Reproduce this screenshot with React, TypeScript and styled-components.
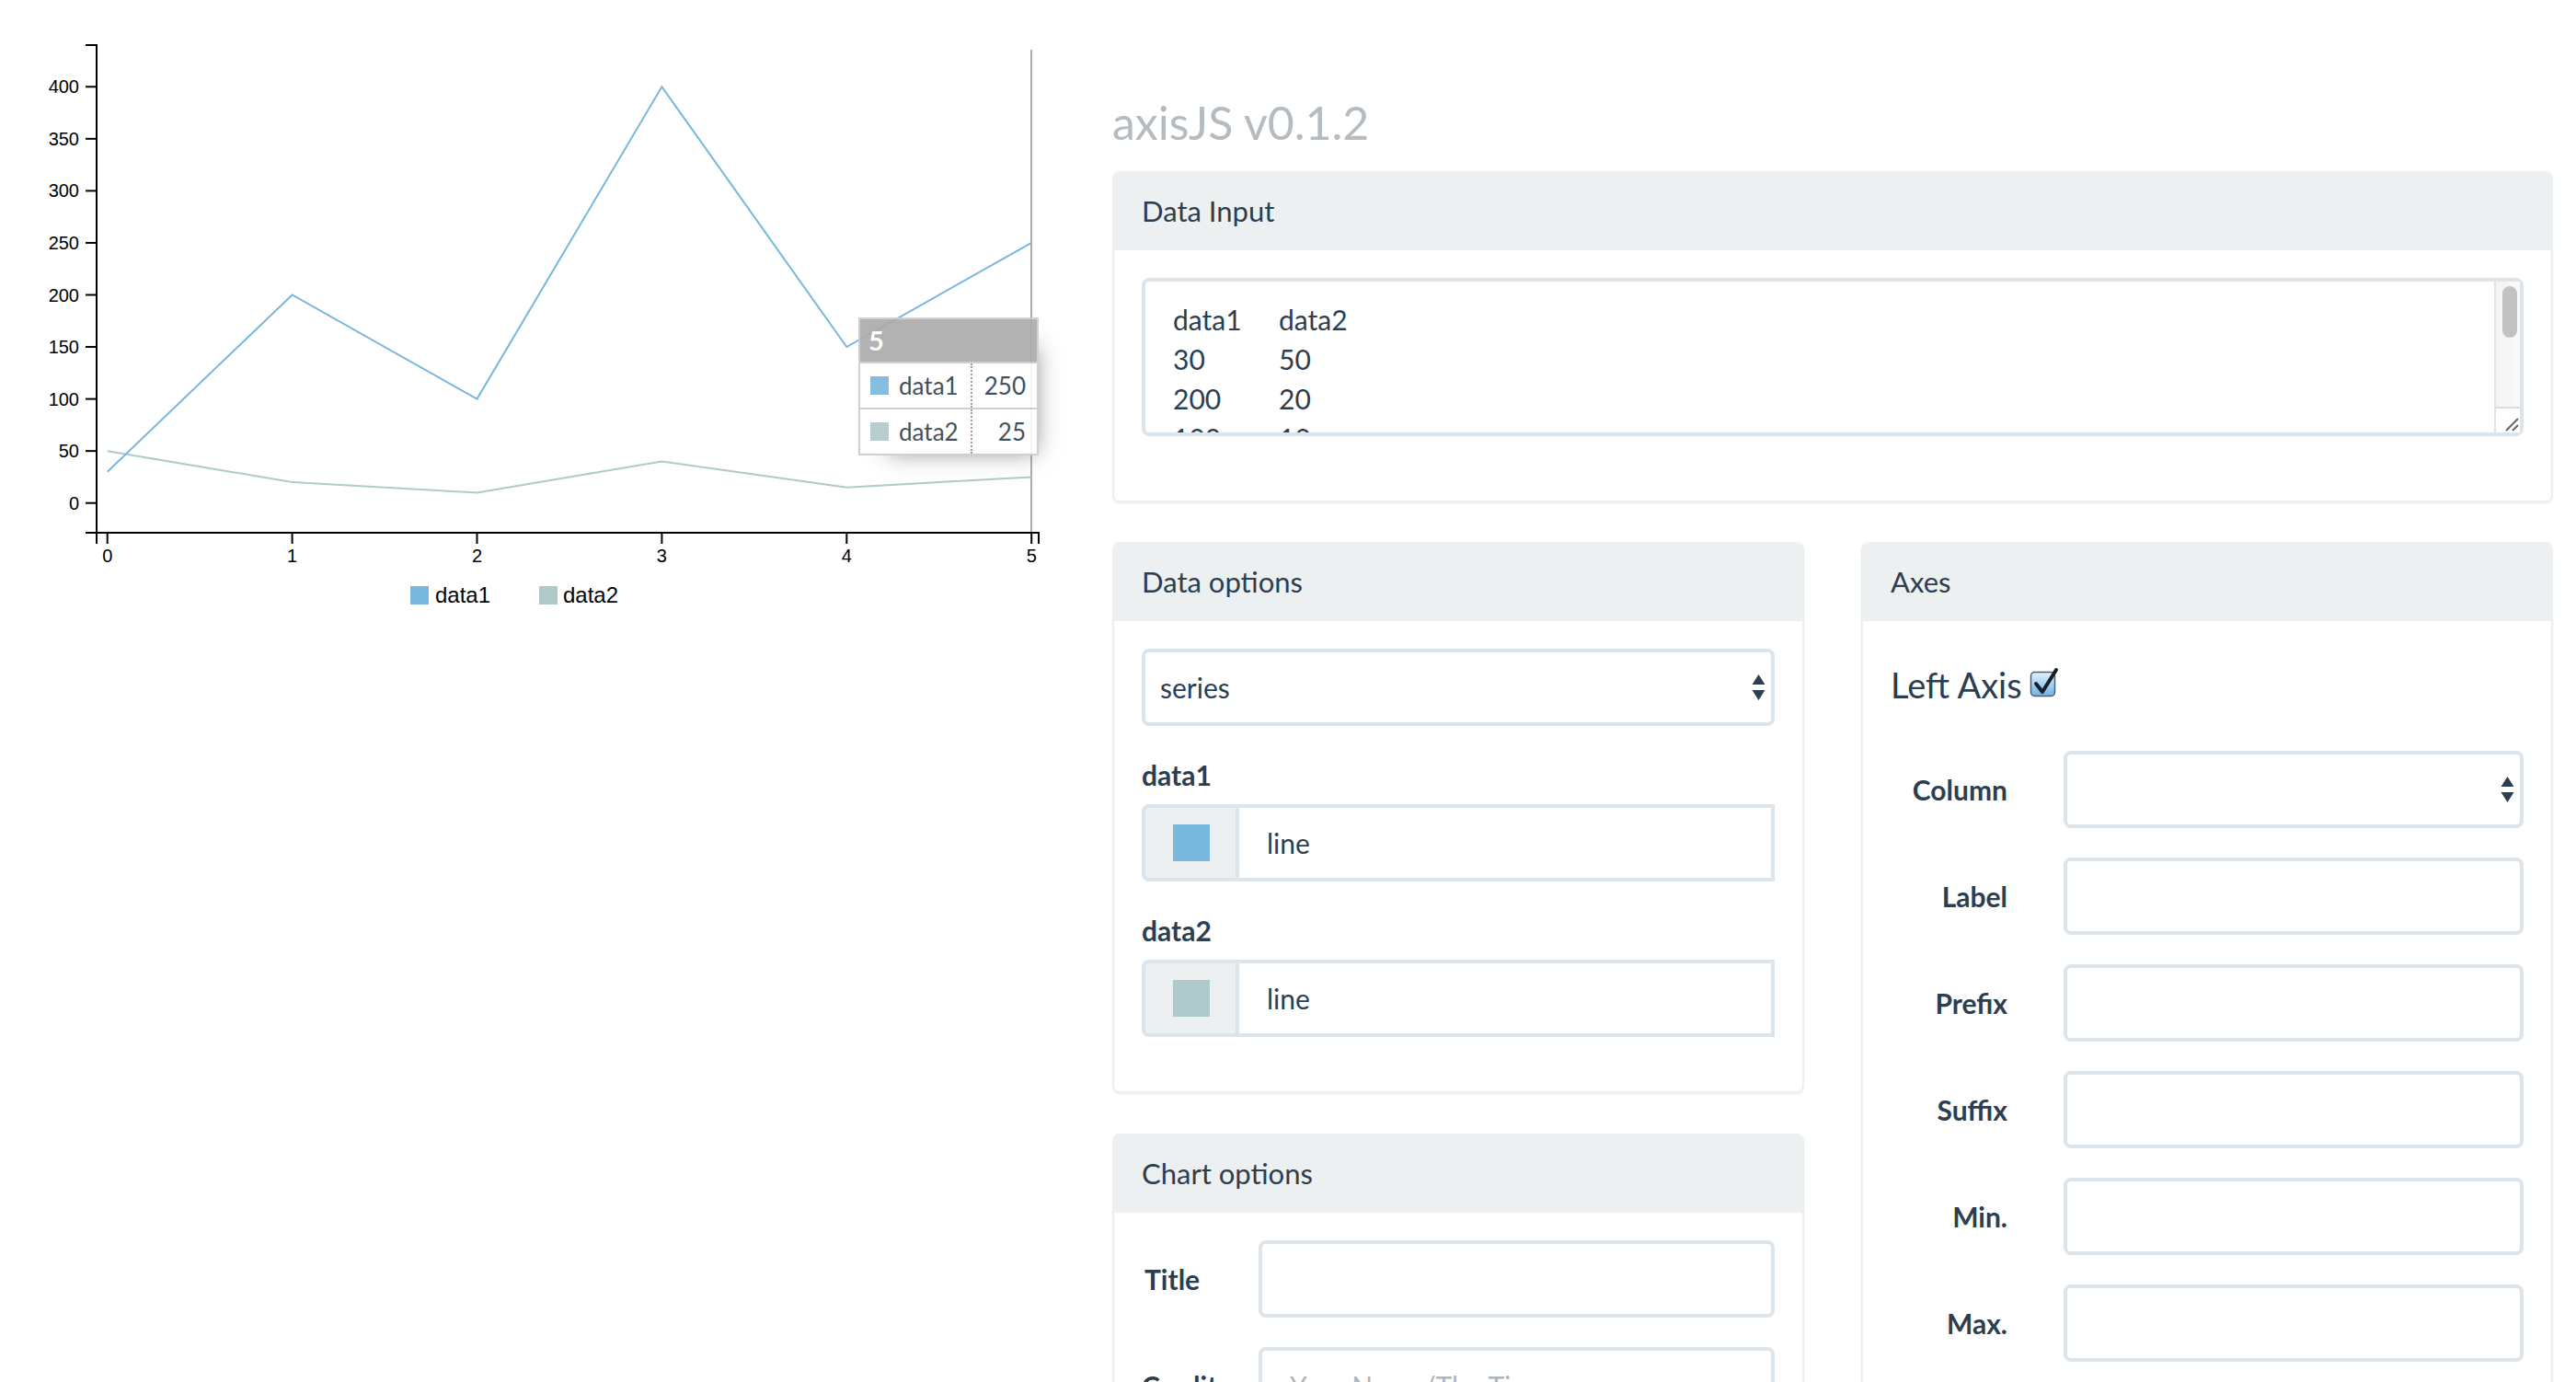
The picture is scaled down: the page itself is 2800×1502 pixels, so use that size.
import React from "react";
import styled, { createGlobalStyle } from "styled-components";

const GlobalStyle = createGlobalStyle`
  html, body { margin: 0; padding: 0; background: #ffffff; }
  body {
    font-family: Lato, "Open Sans", "Liberation Sans", sans-serif;
    color: #2c3e50;
    overflow: hidden;
  }
  *, *::before, *::after { box-sizing: border-box; }
`;

const BLUE = "#78b7de";
const TEAL = "#b0c9cb";

const data1 = [30, 200, 100, 400, 150, 250];
const data2 = [50, 20, 10, 40, 15, 25];

const yOf = (v: number) => 546.7 - 1.131 * v;
const xOf = (i: number) => 116.7 + 200.9 * i;

const Page = styled.div`
  display: flex;
  align-items: flex-start;
  width: 2800px;
  height: 1502px;
  overflow: hidden;
`;

const ChartColumn = styled.div`
  position: relative;
  flex: 0 0 1209px;
  height: 700px;
`;

const ChartSvg = styled.svg`
  display: block;
  font-family: "Liberation Sans", Arial, sans-serif;
`;

const Tooltip = styled.div`
  position: absolute;
  left: 933px;
  top: 345px;
  width: 196px;
  border: 2px solid #cccccc;
  background: #ffffff;
  opacity: 0.9;
  box-shadow: 14px 14px 24px -18px rgb(119, 119, 119);
  font-family: Lato, "Open Sans", sans-serif;
`;

const TooltipHead = styled.div`
  height: 48px;
  padding-left: 9px;
  background: #aaaaaa;
  border-bottom: 2px solid #cccccc;
  color: #ffffff;
  font-weight: 700;
  font-size: 29px;
  line-height: 46px;
`;

const TooltipRow = styled.div<{ $last?: boolean }>`
  display: grid;
  grid-template-columns: 122px 1fr;
  height: ${(p) => (p.$last ? 48 : 50)}px;
  border-bottom: ${(p) => (p.$last ? "none" : "2px solid #cccccc")};
  font-size: 26px;
  color: #2c3e50;
`;

const TooltipName = styled.div`
  display: flex;
  align-items: center;
  gap: 11px;
  padding-left: 11px;
  border-right: 2px dotted #999999;
`;

const TooltipValue = styled.div`
  display: flex;
  align-items: center;
  justify-content: flex-end;
  padding-right: 12px;
`;

const Swatch = styled.span<{ $color: string; $size: number }>`
  display: inline-block;
  flex: 0 0 auto;
  width: ${(p) => p.$size}px;
  height: ${(p) => p.$size}px;
  background: ${(p) => p.$color};
`;

const Controls = styled.div`
  flex: 0 0 1566px;
  display: flex;
  flex-direction: column;
`;

const AppTitle = styled.h3`
  margin: 105px 0 25px;
  font-size: 50px;
  line-height: 56px;
  font-weight: 400;
  color: #b4bcc2;
`;

const Panel = styled.section<{ $mb?: number }>`
  border: 2px solid #ecf0f1;
  border-radius: 8px;
  background: #ffffff;
  box-shadow: 0 2px 2px rgba(0, 0, 0, 0.05);
  margin-bottom: ${(p) => p.$mb ?? 44}px;
`;

const PanelHeading = styled.div`
  background: #ecf0f1;
  border-radius: 6px 6px 0 0;
  padding: 19px 30px 21px;
  font-size: 31px;
  line-height: 44px;
  color: #2c3e50;
`;

const PanelBody = styled.div`
  padding: 30px;
`;

const AreaWrap = styled.div`
  position: relative;
  margin-bottom: 40px;
`;

const DataArea = styled.textarea`
  display: block;
  width: 100%;
  height: 172px;
  margin: 0;
  padding: 20px 60px 20px 30px;
  border: 4px solid #dce4ec;
  border-radius: 8px;
  font-family: Lato, "Open Sans", sans-serif;
  font-size: 30px;
  line-height: 42.86px;
  color: #2c3e50;
  tab-size: 115px;
  -moz-tab-size: 115px;
  white-space: pre;
  resize: none;
  outline: none;
  overflow: hidden;
`;

const ScrollTrack = styled.div`
  position: absolute;
  top: 4px;
  right: 4px;
  width: 28px;
  height: 136px;
  padding: 5px 5px 0 7px;
  background: linear-gradient(to right, #f3f3f3, #fafafa);
  border-left: 2px solid #e3e3e3;
`;

const ScrollThumb = styled.div`
  width: 16px;
  height: 56px;
  border-radius: 8px;
  background: #c2c2c2;
`;

const ResizeCorner = styled.div`
  position: absolute;
  right: 4px;
  bottom: 4px;
  width: 28px;
  height: 28px;
  display: flex;
  align-items: flex-end;
  justify-content: flex-end;
  background: #ffffff;
  border-left: 2px solid #e3e3e3;
  border-top: 2px solid #dcdcdc;
`;

const Columns = styled.div`
  display: grid;
  grid-template-columns: 752px 752px;
  column-gap: 62px;
  align-items: start;
`;

const Stack = styled.div`
  display: flex;
  flex-direction: column;
`;

const FormGroup = styled.div<{ $mb?: number }>`
  margin-bottom: ${(p) => p.$mb ?? 32}px;
`;

const FieldLabel = styled.label`
  display: block;
  margin-bottom: 10px;
  font-size: 30px;
  line-height: 43px;
  font-weight: 700;
  color: #2c3e50;
`;

const SelectWrap = styled.div`
  position: relative;
  width: 100%;
`;

const Select = styled.select`
  display: block;
  width: 100%;
  height: 84px;
  padding: 0 50px 0 16px;
  border: 4px solid #dce4ec;
  border-radius: 8px;
  background: #ffffff;
  font-family: Lato, "Open Sans", sans-serif;
  font-size: 30px;
  color: #2c3e50;
  appearance: none;
  -webkit-appearance: none;
  outline: none;
`;

const SelectArrows = styled.svg`
  position: absolute;
  right: 10px;
  top: 50%;
  transform: translateY(-50%);
  pointer-events: none;
`;

const InputGroup = styled.div`
  display: flex;
  height: 84px;
`;

const Addon = styled.div`
  flex: 0 0 102px;
  display: flex;
  align-items: center;
  justify-content: center;
  padding-left: 2px;
  background: #ecf0f1;
  border: 4px solid #dce4ec;
  border-right: none;
  border-radius: 8px 0 0 8px;
`;

const TextInput = styled.input<{ $square?: boolean }>`
  display: block;
  flex: 1 1 auto;
  width: 100%;
  min-width: 0;
  height: 84px;
  padding: 0 30px;
  border: 4px solid #dce4ec;
  border-radius: ${(p) => (p.$square ? "0" : "8px")};
  background: #ffffff;
  font-family: Lato, "Open Sans", sans-serif;
  font-size: 30px;
  color: #2c3e50;
  outline: none;

  &::placeholder {
    color: #acb6c0;
  }
`;

const HRow = styled.div<{ $label: number; $gap: number; $align: "left" | "right"; $mb?: number }>`
  display: grid;
  grid-template-columns: ${(p) => p.$label}px 1fr;
  column-gap: ${(p) => p.$gap}px;
  align-items: center;
  margin-bottom: ${(p) => p.$mb ?? 32}px;

  & > label {
    text-align: ${(p) => p.$align};
    white-space: nowrap;
    font-size: 30px;
    line-height: 43px;
    font-weight: 700;
    color: #2c3e50;
  }
`;

const AxisHeading = styled.h4`
  display: flex;
  align-items: center;
  margin: 18px 0 51px;
  font-size: 38px;
  line-height: 42px;
  font-weight: 400;
  color: #2c3e50;
`;

const CheckIcon = styled.svg`
  margin-left: 8px;
  margin-top: -4px;
`;

const Arrows = () => (
  <SelectArrows width="15" height="28" viewBox="0 0 15 28">
    <path d="M7.5 0 L14.5 11 H0.5 Z M0.5 17 H14.5 L7.5 28 Z" fill="#2c3e50" />
  </SelectArrows>
);

const Chart = () => {
  const yTicks = [0, 50, 100, 150, 200, 250, 300, 350, 400];
  const pts = (arr: number[]) => arr.map((v, i) => `${xOf(i)},${yOf(v)}`).join(" ");
  return (
    <ChartSvg width="1180" height="700" viewBox="0 0 1180 700">
      <line x1="1121" y1="54" x2="1121" y2="579" stroke="#ababab" strokeWidth="2" />
      <polyline points={pts(data2)} fill="none" stroke={TEAL} strokeWidth="2" />
      <polyline points={pts(data1)} fill="none" stroke={BLUE} strokeWidth="2" />
      <path d="M93,49 H105 V579 H93" fill="none" stroke="#000" strokeWidth="2" />
      {yTicks.map((v) => (
        <g key={v}>
          <line x1="93" y1={yOf(v)} x2="105" y2={yOf(v)} stroke="#000" strokeWidth="2" />
          <text x="86" y={yOf(v)} dy="0.35em" textAnchor="end" fontSize="20" fill="#000">
            {v}
          </text>
        </g>
      ))}
      <path d="M105,591 V579 H1129 V591" fill="none" stroke="#000" strokeWidth="2" />
      {[0, 1, 2, 3, 4, 5].map((i) => (
        <g key={i}>
          <line x1={xOf(i)} y1="579" x2={xOf(i)} y2="591" stroke="#000" strokeWidth="2" />
          <text x={xOf(i)} y="611" textAnchor="middle" fontSize="20" fill="#000">
            {i}
          </text>
        </g>
      ))}
      <rect x="446" y="637" width="20" height="20" fill={BLUE} />
      <text x="473" y="647" dy="0.35em" fontSize="24" fill="#000">data1</text>
      <rect x="586" y="637" width="20" height="20" fill={TEAL} />
      <text x="612" y="647" dy="0.35em" fontSize="24" fill="#000">data2</text>
    </ChartSvg>
  );
};

const dataText = "data1\tdata2\n30\t50\n200\t20\n100\t10\n400\t40\n150\t15\n250\t25\n";

export default function App() {
  return (
    <>
      <GlobalStyle />
      <Page>
        <ChartColumn>
          <Chart />
          <Tooltip>
            <TooltipHead>5</TooltipHead>
            <TooltipRow>
              <TooltipName>
                <Swatch $color={BLUE} $size={20} />
                data1
              </TooltipName>
              <TooltipValue>250</TooltipValue>
            </TooltipRow>
            <TooltipRow $last>
              <TooltipName>
                <Swatch $color={TEAL} $size={20} />
                data2
              </TooltipName>
              <TooltipValue>25</TooltipValue>
            </TooltipRow>
          </Tooltip>
        </ChartColumn>

        <Controls>
          <AppTitle>axisJS v0.1.2</AppTitle>

          <Panel $mb={43}>
            <PanelHeading>Data Input</PanelHeading>
            <PanelBody>
              <AreaWrap>
                <DataArea defaultValue={dataText} spellCheck={false} />
                <ScrollTrack>
                  <ScrollThumb />
                </ScrollTrack>
                <ResizeCorner>
                  <svg width="18" height="18" viewBox="0 0 18 18">
                    <path d="M3 16 L16 3 M10 16 L16 10" stroke="#666" strokeWidth="2" fill="none" />
                  </svg>
                </ResizeCorner>
              </AreaWrap>
            </PanelBody>
          </Panel>

          <Columns>
            <Stack>
              <Panel>
                <PanelHeading>Data options</PanelHeading>
                <PanelBody>
                  <FormGroup>
                    <SelectWrap>
                      <Select defaultValue="series">
                        <option value="series">series</option>
                      </Select>
                      <Arrows />
                    </SelectWrap>
                  </FormGroup>
                  <FormGroup>
                    <FieldLabel>data1</FieldLabel>
                    <InputGroup>
                      <Addon>
                        <Swatch $color={BLUE} $size={40} />
                      </Addon>
                      <TextInput $square defaultValue="line" />
                    </InputGroup>
                  </FormGroup>
                  <FormGroup $mb={29}>
                    <FieldLabel>data2</FieldLabel>
                    <InputGroup>
                      <Addon>
                        <Swatch $color={TEAL} $size={40} />
                      </Addon>
                      <TextInput $square defaultValue="line" />
                    </InputGroup>
                  </FormGroup>
                </PanelBody>
              </Panel>

              <Panel>
                <PanelHeading>Chart options</PanelHeading>
                <PanelBody>
                  <HRow $label={65} $gap={62} $align="left">
                    <label style={{ paddingLeft: 3 }}>Title</label>
                    <TextInput />
                  </HRow>
                  <HRow $label={65} $gap={62} $align="left">
                    <label>Credit</label>
                    <TextInput placeholder="Your Name/The Times" />
                  </HRow>
                </PanelBody>
              </Panel>
            </Stack>

            <Panel>
              <PanelHeading>Axes</PanelHeading>
              <PanelBody>
                <AxisHeading>
                  Left Axis
                  <CheckIcon width="32" height="34" viewBox="0 0 32 34">
                    <defs>
                      <linearGradient id="cbfill" x1="0" y1="0" x2="0" y2="1">
                        <stop offset="0" stopColor="#e3f1fc" />
                        <stop offset="0.5" stopColor="#a9d2f3" />
                        <stop offset="1" stopColor="#6fb0e6" />
                      </linearGradient>
                    </defs>
                    <rect x="1.5" y="5.5" width="26" height="26" rx="4" fill="url(#cbfill)" stroke="#55606c" strokeWidth="1.5" />
                    <path d="M7 18 L14 27 L29 3" fill="none" stroke="#16202c" strokeWidth="4" strokeLinecap="round" strokeLinejoin="round" />
                  </CheckIcon>
                </AxisHeading>
                <HRow $label={127} $gap={61} $align="right">
                  <label>Column</label>
                  <SelectWrap>
                    <Select defaultValue="">
                      <option value=""></option>
                    </Select>
                    <Arrows />
                  </SelectWrap>
                </HRow>
                <HRow $label={127} $gap={61} $align="right">
                  <label>Label</label>
                  <TextInput />
                </HRow>
                <HRow $label={127} $gap={61} $align="right">
                  <label>Prefix</label>
                  <TextInput />
                </HRow>
                <HRow $label={127} $gap={61} $align="right">
                  <label>Suffix</label>
                  <TextInput />
                </HRow>
                <HRow $label={127} $gap={61} $align="right">
                  <label>Min.</label>
                  <TextInput />
                </HRow>
                <HRow $label={127} $gap={61} $align="right">
                  <label>Max.</label>
                  <TextInput />
                </HRow>
              </PanelBody>
            </Panel>
          </Columns>
        </Controls>
      </Page>
    </>
  );
}
